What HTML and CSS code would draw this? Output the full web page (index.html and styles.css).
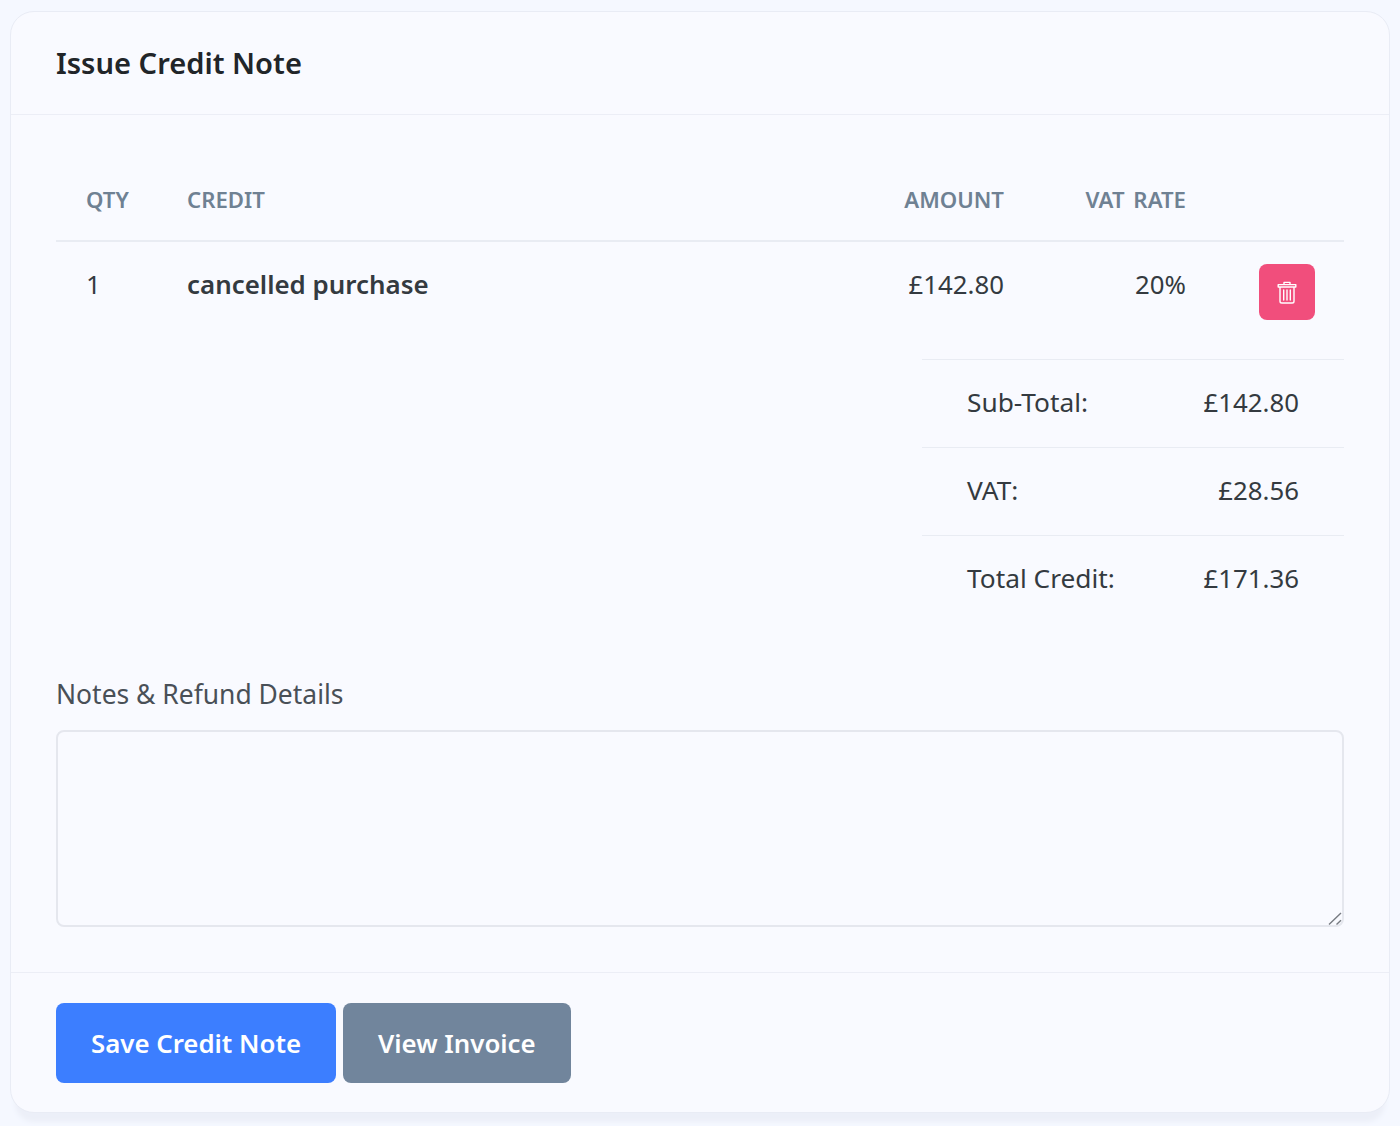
FILE: index.html
```html
<!DOCTYPE html>
<html lang="en">
<head>
<meta charset="utf-8">
<title>Issue Credit Note</title>
<link rel="stylesheet" href="styles.css">
</head>
<body>
<section class="card">
  <header class="card-header"><h1>Issue Credit Note</h1></header>
  <div class="card-body">
    <table class="items">
      <thead>
        <tr>
          <th class="col-qty">QTY</th>
          <th class="col-credit">CREDIT</th>
          <th class="col-amount num">AMOUNT</th>
          <th class="col-vat num">VAT RATE</th>
          <th class="col-action"></th>
        </tr>
      </thead>
      <tbody>
        <tr>
          <td>1</td>
          <td class="desc">cancelled purchase</td>
          <td class="num">£142.80</td>
          <td class="num">20%</td>
          <td class="action-cell">
            <button class="btn-delete" type="button" aria-label="Delete">
              <svg width="20" height="23" viewBox="0 0 20 23" fill="none" stroke="#fff" stroke-width="1.4" stroke-linecap="round" stroke-linejoin="round"><path d="M1.2 3.6h17.6v2.4H1.2zM7 3.4V1.4h6v2M3 6v14.2q0 1.8 1.8 1.8h10.4q1.8 0 1.8-1.8V6M6.7 9v10M10 9v10M13.3 9v10"/></svg>
            </button>
          </td>
        </tr>
      </tbody>
    </table>
    <div class="totals">
      <div class="total-row"><span class="total-label">Sub-Total:</span><span>£142.80</span></div>
      <div class="total-row"><span class="total-label">VAT:</span><span>£28.56</span></div>
      <div class="total-row"><span class="total-label">Total Credit:</span><span>£171.36</span></div>
    </div>
    <label class="notes-label" for="notes">Notes &amp; Refund Details</label>
    <div class="notes-wrap">
      <textarea class="notes" id="notes"></textarea>
      <svg class="grip" width="14" height="13" viewBox="0 0 14 13" stroke="#777b82" stroke-width="1.4" fill="none"><path d="M1 12.5 13 1M8.5 12.5 13 8.2"/></svg>
    </div>
  </div>
  <footer class="card-footer">
    <button class="btn btn-primary" type="button">Save Credit Note</button>
    <button class="btn btn-secondary" type="button">View Invoice</button>
  </footer>
</section>
</body>
</html>
```
FILE: styles.css
```css
* { box-sizing: border-box; }
html, body { height: 100%; }
body {
  margin: 0;
  padding: 11px 10px 0;
  background: #f5f8ff;
  font-family: "Noto Sans", "Open Sans", sans-serif;
  color: #343a40;
  overflow: hidden;
}
.card {
  height: 1102px;
  background: #f9faff;
  border: 1px solid #e9ecf5;
  border-radius: 24px;
  box-shadow: 0 14px 5px -5px #eceff8;
  display: flex;
  flex-direction: column;
}
.card-header {
  height: 103px;
  padding: 0 45px;
  border-bottom: 1px solid #eceef6;
  display: flex;
  align-items: center;
}
.card-header h1 {
  margin: 0;
  font-size: 29.1px;
  font-weight: 600;
  color: #212529;
}
.card-body { padding: 44px 45px 0; flex: 1; }
.items {
  width: 100%;
  border-collapse: collapse;
  table-layout: fixed;
  font-size: 25.8px;
}
.items th {
  height: 82px;
  padding: 0 30px;
  border-bottom: 2px solid #e9ecf3;
  font-size: 22.2px;
  font-weight: 600;
  word-spacing: 3px;
  color: #6f8193;
  text-align: left;
}
.col-qty { width: 101px; }
.col-amount { width: 189px; }
.col-vat { width: 182px; }
.col-action { width: 128px; }
.items th.num, .items td.num { text-align: right; }
.items td {
  height: 118px;
  padding: 20px 30px 0;
  vertical-align: top;
  line-height: 44px;
}
.items td.desc { font-size: 25.9px; font-weight: 600; }
.items td.action-cell { padding: 22px 29px 0 0; text-align: right; line-height: 0; }
.btn-delete {
  width: 56px;
  height: 56px;
  padding: 0;
  border: 0;
  border-radius: 8px;
  background: #f14e7c;
  display: inline-flex;
  align-items: center;
  justify-content: center;
}
.totals { margin-left: auto; width: 422px; font-size: 25.8px; }
.total-row {
  height: 88px;
  padding: 0 45px 3px;
  border-top: 1px solid #e9ecf3;
  display: flex;
  justify-content: space-between;
  align-items: center;
}
.total-label { font-size: 26.3px; }
.notes-label {
  display: block;
  margin-top: 49px;
  font-size: 26.45px;
  line-height: 44px;
  color: #495057;
}
.notes-wrap { position: relative; margin-top: 14px; }
.notes {
  display: block;
  width: 100%;
  height: 197px;
  background: #f9faff;
  border: 2px solid #e5e7ee;
  border-radius: 8px;
  outline: 0;
  resize: none;
}
.grip { position: absolute; right: 2px; bottom: 2px; }
.card-footer {
  height: 140px;
  padding: 30px 45px 0;
  border-top: 1px solid #eceef6;
  display: flex;
  gap: 7px;
  align-items: flex-start;
}
.btn {
  height: 80px;
  padding: 0 35px;
  border: 0;
  border-radius: 8px;
  font-family: inherit;
  font-size: 25.8px;
  font-weight: 600;
  color: #fff;
}
.btn-primary { background: #3c7eff; }
.btn-secondary { background: #71859c; }
```
